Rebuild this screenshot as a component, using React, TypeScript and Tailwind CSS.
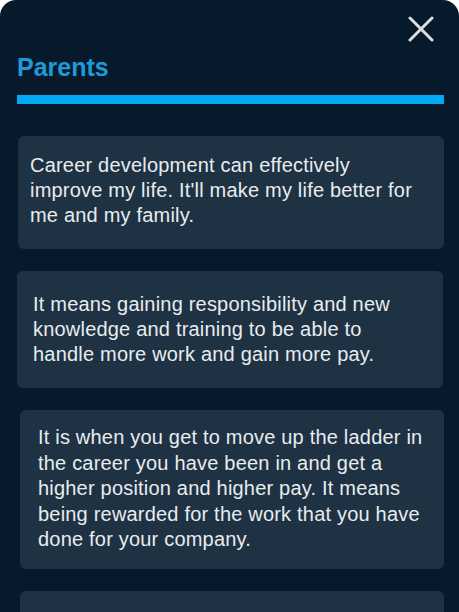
import React from "react";

const cards = [
  {
    text: "Career development can effectively improve my life. It'll make my life better for me and my family.",
    cls: "ml-[1px] pl-[12px] pr-[24px] pt-[17px] pb-[21px] leading-[25px]",
  },
  {
    text: "It means gaining responsibility and new knowledge and training to be able to handle more work and gain more pay.",
    cls: "mr-[1px] pl-[16px] pr-[24px] pt-[21px] pb-[21px] leading-[25px]",
  },
  {
    text: "It is when you get to move up the ladder in the career you have been in and get a higher position and higher pay. It means being rewarded for the work that you have done for your company.",
    cls: "ml-[3px] pl-[18px] pr-[16px] pt-[15px] pb-[16px] leading-[25.5px]",
  },
];

export default function App() {
  return (
    <div className="w-[459px] h-[612px] bg-white overflow-hidden" style={{ fontFamily: '"Liberation Sans", Arial, sans-serif' }}>
      <div className="h-full bg-[#061a2b] rounded-t-[16px] overflow-hidden pl-[17px] pr-[15px]">
        <div className="flex justify-end pt-[16px] pr-[10px]">
          <svg width="26" height="26" viewBox="0 0 26 26" fill="none">
            <path d="M2 2 L24 24 M24 2 L2 24" stroke="#dedede" strokeWidth="3" strokeLinecap="round" />
          </svg>
        </div>
        <h1 className="mt-[10px] text-[25px] leading-[30px] font-bold text-[#1f9ad6]">Parents</h1>
        <div className="mt-[13px] h-[9px] bg-[#03a9f4]" />
        <div className="mt-[32px] flex flex-col gap-[22px]">
          {cards.map((c, i) => (
            <div key={i} className={`bg-[#1f3243] rounded-[6px] text-[20px] tracking-[0.2px] text-[#e8ecef] ${c.cls}`}>
              {c.text}
            </div>
          ))}
          <div className="ml-[3px] h-[60px] bg-[#1f3243] rounded-[6px]" />
        </div>
      </div>
    </div>
  );
}
